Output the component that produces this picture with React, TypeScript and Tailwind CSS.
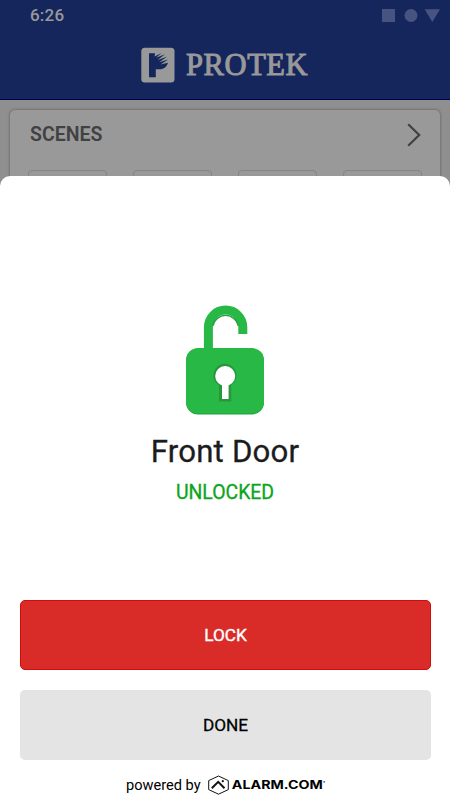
import { ReactNode } from 'react';

function StatusBar() {
  return (
    <div className="flex h-[30px] items-center justify-between pt-[1px] pr-[10px] pl-[30px]">
      <span className="text-[17px] leading-none font-medium tracking-[0.2px] text-[#999999]">6:26</span>
      <svg width="58" height="14" viewBox="0 0 58 14" fill="#475482">
        <path d="M0 0h13v13H0z" />
        <circle cx="29" cy="6.5" r="6.5" />
        <path d="M42.7 0.3H58L50.3 12.9z" />
      </svg>
    </div>
  );
}

function ProtekMark() {
  return (
    <svg width="34" height="36" viewBox="0 0 34 36" className="shrink-0">
      <rect x="0.3" y="0.8" width="33.2" height="34.7" rx="3.5" fill="#999999" />
      <path
        fill="#14265c"
        d="M8 6.3h6L13.6 9.4 20.5 6 15 10.8 24 7.2 16.6 13 26 9.8 18 15.2 27.3 12.6 19.4 17.4 27 15.8C26 19.6 23 22.3 18.4 22.3H14.8v8H8z"
      />
    </svg>
  );
}

function Header() {
  return (
    <header className="h-[100px] border-b border-[#000050] bg-[#14265c]">
      <StatusBar />
      <div className="mt-[16px] flex items-center pl-[141px] text-[#999999]">
        <ProtekMark />
        <span className="mt-[1px] ml-[11px] font-['Liberation_Serif',serif] text-[30.5px] leading-9 tracking-[0.6px] [-webkit-text-stroke:1px_#999999]">
          PROTEK
        </span>
      </div>
    </header>
  );
}

function ScenesCard() {
  return (
    <section className="mx-[10px] mt-[10px] h-[120px] rounded-[5px] bg-[#999999] shadow-[0_0_3px_rgba(0,0,0,0.4)]">
      <div className="flex h-[50px] items-center justify-between pr-[19px] pl-[20px]">
        <h2 className="text-[19.5px] font-semibold text-[#414141]">SCENES</h2>
        <svg width="14" height="24" viewBox="0 0 14 24" fill="none" stroke="#414141" strokeWidth="2.2">
          <path d="M1.2 1.2L12.2 12 1.2 22.8" />
        </svg>
      </div>
      <div className="mt-[10px] flex justify-between px-[18px]">
        {[0, 1, 2, 3].map((i) => (
          <div key={i} className="h-10 w-[79px] rounded-[4px] border border-[#858585]" />
        ))}
      </div>
    </section>
  );
}

function UnlockedIcon() {
  return (
    <svg width="80" height="112" viewBox="0 0 80 112" className="block">
      <path d="M23.4 45V23.3a17.2 17.2 0 0 1 34.4 0V30" fill="none" stroke="#27b845" strokeWidth="9" />
      <path d="M27.9 22a12.9 12.9 0 0 1 25.4 0" fill="none" stroke="#249f3e" strokeWidth="1.4" />
      <rect x="1" y="45" width="78" height="65.5" rx="12" fill="#20a33b" />
      <rect x="1" y="44" width="78" height="65.5" rx="12" fill="#27b845" />
      <path d="M28.4 72.5a11.6 11.6 0 1 1 17.8 8.6V97.5H34V81.1a11.6 11.6 0 0 1-5.6-8.6z" fill="#27963d" />
      <circle cx="40.2" cy="72" r="10" fill="#fff" />
      <path d="M37 78h6.6v17H37z" fill="#fff" />
    </svg>
  );
}

function ActionButton({ className, children }: { className: string; children: ReactNode }) {
  return (
    <button className={`h-[70px] w-full rounded-[5px] pt-[1px] text-[17.2px] ${className}`}>
      {children}
    </button>
  );
}

function PoweredBy() {
  return (
    <div className="flex items-center pl-[126px] text-black">
      <span className="w-[75px] text-[14.6px] leading-5 whitespace-nowrap">powered by</span>
      <svg width="119" height="20" viewBox="0 0 119 20" className="ml-[6px]">
        <path d="M11.5 1L21.3 5.6v9L11.5 19.2 1.7 14.6v-9z" fill="none" stroke="#111" strokeWidth="1" strokeLinejoin="round" />
        <path d="M4.8 13.2L11.2 6.8l6.3 6.4" fill="none" stroke="#111" strokeWidth="2" />
        <circle cx="15.8" cy="6.2" r="1.1" fill="#111" />
        <text
          x="24.8"
          y="14"
          textLength="91"
          lengthAdjust="spacingAndGlyphs"
          className="font-['Inter',sans-serif] text-[11.5px] font-bold"
        >
          ALARM.COM
        </text>
        <circle cx="117.2" cy="6.8" r="0.9" fill="#555" />
      </svg>
    </div>
  );
}

function LockSheet() {
  return (
    <div className="absolute inset-x-0 top-[176px] bottom-0 flex flex-col rounded-t-[10px] bg-white">
      <div className="flex h-[424px] flex-col items-center pt-[128px]">
        <UnlockedIcon />
        <h1 className="mt-[16px] text-[31.2px] leading-10 tracking-[0.2px] text-[#1b1c1e] [-webkit-text-stroke:0.3px_#1b1c1e]">
          Front Door
        </h1>
        <p className="mt-[9px] text-[19.4px] leading-6 text-[#0aa51c] [-webkit-text-stroke:0.3px_#0aa51c]">UNLOCKED</p>
      </div>
      <div className="flex flex-col gap-5 pr-[19px] pl-5">
        <ActionButton className="border border-[#d30b0b] bg-[#d92c28] text-white [-webkit-text-stroke:0.4px_#fff]">LOCK</ActionButton>
        <ActionButton className="bg-[#e4e4e4] text-black [-webkit-text-stroke:0.3px_#000]">DONE</ActionButton>
      </div>
      <div className="mt-[15px]">
        <PoweredBy />
      </div>
    </div>
  );
}

export default function App() {
  return (
    <div className="relative h-[800px] w-[450px] overflow-hidden bg-[#8f8f8f] font-['Roboto',sans-serif]">
      <Header />
      <ScenesCard />
      <LockSheet />
    </div>
  );
}
